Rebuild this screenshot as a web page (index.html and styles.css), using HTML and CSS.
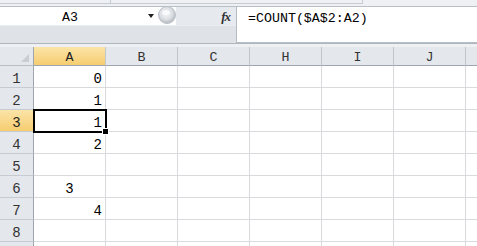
FILE: index.html
```html
<!DOCTYPE html>
<html>
<head>
<meta charset="utf-8">
<link rel="stylesheet" href="styles.css">
</head>
<body>
<div class="app">
  <div class="chrome"><span class="seg s1"></span><span class="seg s2"></span></div>
  <div class="fbar">
    <div class="fleft">
      <div class="nrow">
        <div class="namebox"><span class="nametext">A3</span><span class="arrow"></span></div>
        <div class="knob"><svg width="18" height="20" viewBox="0 0 18 20"><defs><radialGradient id="g" cx="0.45" cy="0.4" r="0.6"><stop offset="0" stop-color="#f4f5f7"/><stop offset="0.6" stop-color="#dcdfe3"/><stop offset="1" stop-color="#b3b8bf"/></radialGradient></defs><circle cx="9" cy="10" r="8.5" fill="url(#g)" stroke="#bcc1c8"/><ellipse cx="8" cy="7.5" rx="4" ry="2.5" fill="#fbfbfc" opacity="0.8"/></svg></div>
        <div class="fxbox"><span class="fx">fx</span></div>
      </div>
      <div class="nfill"></div>
    </div>
    <div class="formula">=COUNT($A$2:A2)</div>
  </div>
  <div class="sep"></div>
  <div class="sheet">
    <div class="corner"><svg width="8" height="8" viewBox="0 0 8 8"><polygon points="8,0 8,8 0,8" fill="#c9cdd3"/></svg></div>
    <div class="ch sel">A</div>
    <div class="ch">B</div>
    <div class="ch">C</div>
    <div class="ch">H</div>
    <div class="ch">I</div>
    <div class="ch">J</div>
    <div class="ch last"></div>

    <div class="rh">1</div><div class="c r">0</div><div class="c"></div><div class="c"></div><div class="c"></div><div class="c"></div><div class="c"></div><div class="c last"></div>
    <div class="rh">2</div><div class="c r">1</div><div class="c"></div><div class="c"></div><div class="c"></div><div class="c"></div><div class="c"></div><div class="c last"></div>
    <div class="rh sel">3</div><div class="c r active">1<span class="handle"></span></div><div class="c"></div><div class="c"></div><div class="c"></div><div class="c"></div><div class="c"></div><div class="c last"></div>
    <div class="rh">4</div><div class="c r">2</div><div class="c"></div><div class="c"></div><div class="c"></div><div class="c"></div><div class="c"></div><div class="c last"></div>
    <div class="rh">5</div><div class="c"></div><div class="c"></div><div class="c"></div><div class="c"></div><div class="c"></div><div class="c"></div><div class="c last"></div>
    <div class="rh">6</div><div class="c m">3</div><div class="c"></div><div class="c"></div><div class="c"></div><div class="c"></div><div class="c"></div><div class="c last"></div>
    <div class="rh">7</div><div class="c r">4</div><div class="c"></div><div class="c"></div><div class="c"></div><div class="c"></div><div class="c"></div><div class="c last"></div>
    <div class="rh">8</div><div class="c"></div><div class="c"></div><div class="c"></div><div class="c"></div><div class="c"></div><div class="c"></div><div class="c last"></div>
    <div class="rh"></div><div class="c"></div><div class="c"></div><div class="c"></div><div class="c"></div><div class="c"></div><div class="c"></div><div class="c last"></div>
  </div>
</div>
</body>
</html>
```
FILE: styles.css
```css
html, body {
  margin: 0;
  padding: 0;
  background: #ffffff;
  overflow: hidden;
}
.app {
  width: 477px;
  height: 246px;
  overflow: hidden;
  font-family: "Liberation Mono", "DejaVu Sans Mono", monospace;
  font-size: 13.3px;
  color: #000;
}
.chrome {
  height: 6px;
  background: #eef0f3;
  border-bottom: 1px solid #b9bfc7;
  display: flex;
}
.seg {
  height: 3px;
  border-bottom: 1px solid #c7ccd3;
  border-right: 1px solid #c7ccd3;
}
.s1 { width: 110px; }
.s2 { width: 251px; }
.fbar {
  display: flex;
  height: 36px;
  background: #dfe3e8;
}
.fleft {
  width: 236px;
  display: flex;
  flex-direction: column;
  border-right: 1px solid #b6bcc5;
}
.nrow {
  display: flex;
  height: 18px;
}
.namebox {
  width: 159px;
  background: #ffffff;
  display: flex;
  align-items: center;
}
.nametext {
  width: 140px;
  text-align: center;
  line-height: 18px;
  padding-top: 3px;
}
.arrow {
  width: 0;
  height: 0;
  margin-left: 8px;
  border-left: 3px solid transparent;
  border-right: 3px solid transparent;
  border-top: 4px solid #222;
}
.knob {
  width: 18px;
  height: 18px;
  overflow: hidden;
  background: #ffffff;
  margin-left: -1px;
}
.knob svg { display: block; margin-top: -2px; }
.fxbox {
  flex: 1;
  display: flex;
  justify-content: flex-end;
  align-items: center;
  padding-right: 6px;
  background: #e6e9ed;
}
.fx {
  font-family: "Liberation Serif", serif;
  font-style: italic;
  font-weight: bold;
  font-size: 13px;
  color: #333;
  letter-spacing: -1px;
  padding-top: 2px;
}
.nfill {
  flex: 1;
  border-top: 1px solid #e9ecf0;
}
.formula {
  flex: 1;
  background: #ffffff;
  padding: 3px 0 0 11px;
  line-height: 18px;
  border-bottom: 1px solid #b6bcc5;
}
.sep {
  height: 3px;
  background: #eef0f3;
  border-top: 1px solid #b0b6be;
}
.sheet {
  display: grid;
  grid-template-columns: 34px 72px 72px 72px 72px 72px 72px 1fr;
  grid-template-rows: 19px repeat(9, 22px);
}
.corner, .ch, .rh {
  background: #e4e7ec;
  border-right: 1px solid #c2c7ce;
  border-bottom: 1px solid #b8bec6;
  box-sizing: border-box;
  color: #333;
}
.corner {
  border-right: 1px solid #9ea5ae;
  display: flex;
  justify-content: flex-end;
  align-items: flex-end;
  padding: 0 4px 3px 0;
}
.corner svg { display: block; }
.ch {
  text-align: center;
  line-height: 18px;
  padding-top: 2px;
  border-bottom: 1px solid #9ea5ae;
  overflow: hidden;
}
.ch.last { border-right: none; }
.rh {
  font-size: 14px;
  text-align: center;
  line-height: 21px;
  padding-top: 3px;
  overflow: hidden;
  border-right: 1px solid #9ea5ae;
  border-bottom: 1px solid #c6cbd2;
}
.sel {
  background: linear-gradient(#fbe4a8, #f6cd70);
  color: #222;
}
.c {
  font-size: 14px;
  border-right: 1px solid #d8dadd;
  border-bottom: 1px solid #d8dadd;
  box-sizing: border-box;
  line-height: 21px;
  padding-top: 3px;
  position: relative;
}
.c.last { border-right: none; }
.r { text-align: right; padding-right: 3px; }
.m { text-align: center; }
.active {
  outline: 2px solid #000;
  outline-offset: -1px;
  z-index: 1;
}
.handle {
  position: absolute;
  right: -4px;
  bottom: -4px;
  width: 5px;
  height: 5px;
  background: #000;
  border: 1px solid #fff;
}
```
